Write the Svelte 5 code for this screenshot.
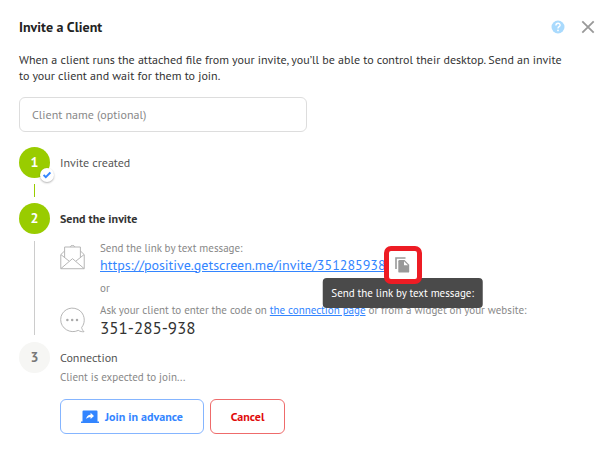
<script lang="ts">
  let clientName: string = '';
  let inviteLink: string = 'https://positive.getscreen.me/invite/351285938';
  let inviteCode: string = '351-285-938';

  const copyLink = (): void => {
    navigator.clipboard.writeText(inviteLink);
  }
</script>

<div class="invite">

  <header class="top">
    <h1>Invite a Client</h1>
    <div class="top-actions">
      <button class="icon-bttn" aria-label="Help">
        <svg width="14" height="14" viewBox="0 0 14 14">
          <circle cx="7" cy="7" r="6.5" fill="#a9dafd" />
          <path d="M4.9 5.4C5 2.4 9.2 2.6 9.1 5.2C9 6.7 7 6.7 7 8.4" fill="none" stroke="#fff" stroke-width="1.4" />
          <circle cx="7" cy="10.4" r=".9" fill="#fff" />
        </svg>
      </button>
      <button class="icon-bttn" aria-label="Close">
        <svg width="14" height="14" viewBox="0 0 14 14">
          <path d="M1.3 1.3l11.4 11.4M12.7 1.3l-11.4 11.4" stroke="#999" stroke-width="1.8" />
        </svg>
      </button>
    </div>
  </header>

  <p class="intro">When a client runs the attached file from your invite, you’ll be able to control their desktop. Send an invite to your client and wait for them to join.</p>

  <input class="client-name" type="text" aria-label="Client name" placeholder="Client name (optional)" bind:value={clientName}>

  <div class="step">
    <div class="rail">
      <div class="number done">
        1
        <span class="check">
          <svg width="8" height="8" viewBox="0 0 8 8">
            <path d="M.6 4l2.2 2.2l4.6-4.8" fill="none" stroke="#3385ff" stroke-width="1.9" />
          </svg>
        </span>
      </div>
      <div class="line green"></div>
    </div>
    <div class="content">
      <h2>Invite created</h2>
    </div>
  </div>

  <div class="step sending">
    <div class="rail">
      <div class="number done">2</div>
      <div class="line"></div>
    </div>
    <div class="content">
      <h2 class="active">Send the invite</h2>

      <div class="option">
        <svg width="25" height="26" viewBox="0 0 26 26" fill="none" stroke="#b3b3b3">
          <path d="M5 6.5L.8 10.5V25.2H25.2V10.5L21 6.5M1 10.5L9.5 17.3M25 10.5L16.5 17.3M1 25L13 14.7L25 25" />
          <path d="M4.8 13.5V2.6H21.2V13.5M10.5 2.5C11 .5 15 .5 15.5 2.5" />
        </svg>
        <div>
          <div class="hint">Send the link by text message:</div>
          <div class="link-row">
            <a class="link" href={inviteLink}>{inviteLink}</a>
            <div class="copy">
              <button class="copy-bttn" aria-label="Copy link" on:click={copyLink}>
                <svg width="15" height="16" viewBox="0 0 15 16">
                  <path d="M1 12V1H10.5" fill="none" stroke="#999" stroke-width="1.6" />
                  <path d="M4.5 3H9.5L14.2 7.7V14.4Q14.2 15.6 13 15.6H4.5Q3.3 15.6 3.3 14.4V4.2Q3.3 3 4.5 3Z" fill="#999" />
                  <path d="M9 4.2V8.2H13Z" fill="#fff" />
                </svg>
              </button>
              <div class="tooltip" role="tooltip">Send the link by text message:</div>
            </div>
          </div>
        </div>
      </div>

      <div class="hint or">or</div>

      <div class="option">
        <svg width="25" height="26" viewBox="0 0 26 26" fill="none" stroke="#b3b3b3">
          <path d="M22.5 20.8C27.3 15 25.6 5.6 18.8 2.1C10-2.3.7 3.8.7 12.6C.7 21.9 10.7 27.8 19 23.8C21 25 23 25.3 25 25.2C23.6 24 22.8 22.5 22.5 20.8Z" />
          <g fill="#aaa" stroke="none">
            <circle cx="7.7" cy="13" r="1.3" />
            <circle cx="12.7" cy="13" r="1.3" />
            <circle cx="17.7" cy="13" r="1.3" />
          </g>
        </svg>
        <div>
          <div class="hint">Ask your client to enter the code on <a href="#connection">the connection page</a> or from a widget on your website:</div>
          <div class="code">{inviteCode}</div>
        </div>
      </div>
    </div>
  </div>

  <div class="step">
    <div class="rail">
      <div class="number">3</div>
    </div>
    <div class="content">
      <h2 id="connection">Connection</h2>
      <div class="hint status">Client is expected to join...</div>
      <div class="buttons-block">
        <button class="bttn join">
          <svg width="18" height="14" viewBox="0 0 18 14">
            <path d="M2.5.5H15.5Q16.5.5 16.5 1.5V11.5H18V13H0V11.5H1.5V1.5Q1.5.5 2.5.5Z" fill="#3385ff" />
            <path d="M5.2 9C5.5 6.2 7 4.9 9.6 4.7V2.8L13 6L9.6 9.1V7.2C7.8 7.1 6.3 7.7 5.2 9Z" fill="#fff" />
          </svg>
          Join in advance
        </button>
        <button class="bttn cancel">Cancel</button>
      </div>
    </div>
  </div>

</div>

<style>
  :global(body) {
    margin: 0;
    background-color: #fff;
  }

  .invite {
    padding: 18px 21px 23px 19px;
    font-family: "PT Sans", "Noto Sans", sans-serif;
    font-size: 12px;
    line-height: 16px;
    color: #333;
  }

  .top {
    display: flex;
    justify-content: space-between;
    align-items: center;
  }

  h1 {
    margin: 0;
    font-size: 14px;
    line-height: 18px;
    font-weight: 700;
    color: #222;
  }

  .top-actions {
    display: flex;
    gap: 16px;
  }

  button {
    font-family: inherit;
    cursor: pointer;
  }

  .icon-bttn {
    display: flex;
    padding: 0;
    border: none;
    background: none;
  }

  .intro {
    margin: 16px 0 13px;
    padding-right: 24px;
  }

  .client-name {
    display: block;
    box-sizing: border-box;
    width: 50%;
    height: 35px;
    padding: 0 12px;
    margin-bottom: 15px;
    border: 1px solid #ddd;
    border-radius: 6px;
    font-family: inherit;
    font-size: 12px;
    color: #333;
  }

  .client-name::placeholder {
    color: #888;
  }

  .step {
    display: flex;
    gap: 10px;
  }

  .rail {
    display: flex;
    flex-direction: column;
    align-items: center;
    width: 31px;
    flex-shrink: 0;
  }

  .number {
    position: relative;
    width: 31px;
    height: 31px;
    border-radius: 50%;
    line-height: 31px;
    font-size: 14px;
    font-weight: 700;
    text-align: center;
    color: #777;
    background-color: #f6f6f4;
  }

  .number.done {
    color: #fff;
    background-color: #9c0;
  }

  .check {
    position: absolute;
    right: -4px;
    bottom: -4px;
    display: flex;
    justify-content: center;
    align-items: center;
    width: 14px;
    height: 14px;
    border-radius: 50%;
    background-color: #fff;
    box-shadow: 0 1px 2px rgba(0,0,0,.3);
  }

  .line {
    flex: 1;
    width: 1px;
    margin: 7px 0;
    background-color: #ccc;
  }

  .line.green {
    flex: none;
    height: 13px;
    margin: 6px 0;
    background-color: #9c0;
  }

  .content {
    flex: 1;
    min-width: 0;
  }

  .sending .content {
    padding-bottom: 4px;
  }

  h2 {
    margin: 0;
    font-size: 12px;
    line-height: 31px;
    font-weight: 400;
    color: #555;
  }

  h2.active {
    font-weight: 700;
    color: #333;
  }

  .option {
    display: flex;
    align-items: center;
    gap: 15px;
    margin-top: 6px;
  }

  .option svg {
    flex-shrink: 0;
  }

  .hint {
    font-size: 11px;
    line-height: 16px;
    color: #888;
  }

  .or {
    margin: 7px 0 0 40px;
  }

  .status {
    margin-top: -4px;
  }

  a {
    color: #3385ff;
  }

  .link-row {
    display: flex;
    align-items: center;
    height: 17px;
  }

  .link {
    font-size: 14px;
  }

  .copy {
    position: relative;
    display: flex;
    margin: -10px 0 -10px -2px;
  }

  .copy-bttn {
    display: flex;
    justify-content: center;
    align-items: center;
    width: 38px;
    height: 38px;
    padding: 0;
    border: 5px solid #ed1c24;
    border-radius: 7px;
    background-color: #fff;
    z-index: 2;
  }

  .copy .tooltip {
    position: absolute;
    top: 32px;
    left: 50%;
    transform: translateX(-50%);
    padding: 7px 9px;
    border-radius: 4px;
    font-size: 11px;
    white-space: nowrap;
    color: #fff;
    background-color: rgba(64,64,64,.95);
    z-index: 1;
  }

  .code {
    font-size: 17px;
    line-height: 20px;
    color: #333;
  }

  .buttons-block {
    display: flex;
    gap: 6px;
    margin-top: 14px;
  }

  .bttn {
    display: flex;
    align-items: center;
    gap: 6px;
    height: 35px;
    padding: 0 20px;
    border: 1px solid;
    border-radius: 6px;
    font-size: 12px;
    font-weight: 700;
    background-color: #fff;
  }

  .bttn.join {
    border-color: #85b5ff;
    color: #3385ff;
  }

  .bttn.cancel {
    border-color: #ee6b6b;
    color: #e00b0b;
  }
</style>
